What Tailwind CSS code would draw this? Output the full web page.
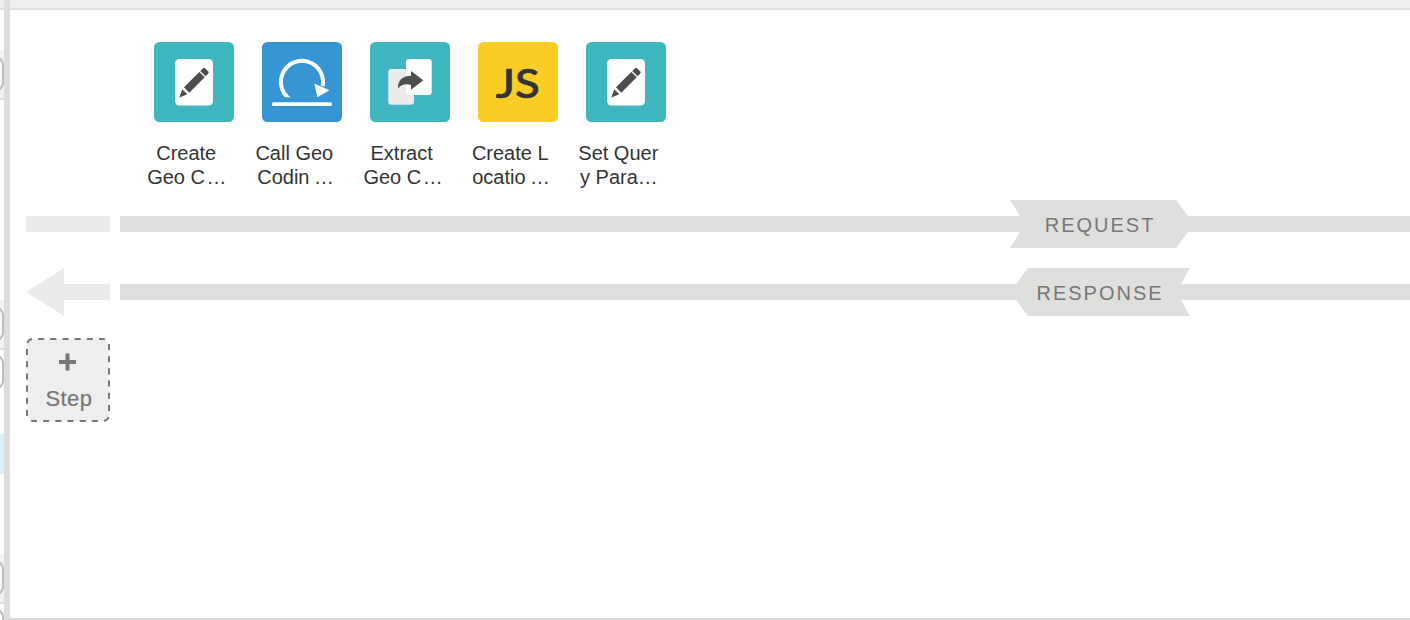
<!DOCTYPE html>
<html lang="en">
<head>
<meta charset="utf-8">
<title>Flow editor</title>
<script src="https://cdn.jsdelivr.net/npm/@tailwindcss/browser@4"></script>
</head>
<body class="w-[1410px] h-[620px] overflow-hidden bg-white flex font-['Liberation_Sans',sans-serif]">
<svg class="hidden">
  <symbol id="pencil" viewBox="0 0 80 80">
    <rect width="80" height="80" rx="5.5" fill="#3fb6bf"/>
    <rect x="21" y="17" width="38" height="46.5" rx="4.5" fill="#fff"/>
    <path fill="#4d4d4d" d="M25.3 55.5L28.3 47.2L33.4 52.3ZM30 45.3L45.3 30L50.7 35.2L35.3 50.7ZM46.3 29L49 26.3Q50 25.4 51 26.3L54.4 29.6Q55.1 30.5 54.4 31.3L51.5 34.2Z"/>
  </symbol>
</svg>
<aside class="w-1 shrink-0 overflow-hidden flex flex-col">
  <div class="h-2.5 shrink-0 bg-[#eee] border-b-2 border-[#ddd]"></div>
  <div class="mt-10 h-[50px] shrink-0 bg-[#f2f2f2] border-b-2 border-[#ddd] flex items-center justify-end"><div class="w-10 h-[34px] shrink-0 border-2 border-[#b4bfc4] rounded-lg bg-[#f7f7f7]"></div></div>
  <div class="mt-[200px] h-[50px] shrink-0 bg-[#f2f2f2] border-b-2 border-[#ddd] flex items-center justify-end"><div class="w-10 h-[34px] shrink-0 border-2 border-[#b4bfc4] rounded-lg bg-[#f7f7f7]"></div></div>
  <div class="h-[84px] shrink-0 pt-[5px] flex justify-end"><div class="w-10 h-[34px] shrink-0 border-2 border-[#b4bfc4] rounded-lg"></div></div>
  <div class="h-10 shrink-0 bg-[#d9effa]"></div>
  <div class="mt-20 h-[50px] shrink-0 bg-[#f2f2f2] border-b-2 border-[#ddd] flex items-center justify-end"><div class="w-10 h-[34px] shrink-0 border-2 border-[#b4bfc4] rounded-lg bg-[#f7f7f7]"></div></div>
  <div class="h-10 shrink-0 pt-[5px] flex justify-end"><div class="w-10 h-[34px] shrink-0 border-2 border-[#b4bfc4] rounded-lg"></div></div>
</aside>
<div class="w-1.5 shrink-0 bg-[#dcdcdc]"></div>
<main class="w-[1400px] h-[620px] flex flex-col border-b-2 border-[#dcdcdc]">
  <div class="h-2.5 shrink-0 bg-[#eee] border-b-2 border-[#e0e0e0]"></div>
  <section class="flex pl-[130px] pt-8 h-[190px] shrink-0 text-[20px] leading-6 text-[#333] whitespace-nowrap">
    <div class="w-[108px]">
      <svg class="ml-3.5 size-20"><use href="#pencil"/></svg>
      <div class="pt-[19px]"><div class="pl-[16.2px]">Create</div><div class="pl-[7.2px]">Geo C<span class="ml-[1.5px]">…</span></div></div>
    </div>
    <div class="w-[108px]">
      <svg class="ml-3.5 size-20" viewBox="0 0 80 80">
        <clipPath id="cut"><path d="M0 0H80V55.3H0Z"/></clipPath>
        <rect width="80" height="80" rx="5.5" fill="#3695d4"/>
        <path clip-path="url(#cut)" d="M29 58A21.1 21.1 0 1 1 60.7 44" fill="none" stroke="#fff" stroke-width="4"/>
        <path d="M52.3 41.5L67.5 48.2L55.4 55.2Z" fill="#fff"/>
        <rect x="10" y="60.3" width="60" height="3.7" rx="1.5" fill="#fff"/>
      </svg>
      <div class="pt-[19px]"><div class="pl-[7.4px]">Call Geo</div><div class="pl-[9.2px]">Codin<span class="ml-[4.5px]">…</span></div></div>
    </div>
    <div class="w-[108px]">
      <svg class="ml-3.5 size-20" viewBox="0 0 80 80">
        <rect width="80" height="80" rx="5.5" fill="#3fb6bf"/>
        <rect x="18.3" y="27" width="25.7" height="35.8" rx="3" fill="#ebebeb"/>
        <rect x="36" y="17" width="25.7" height="36" rx="3" fill="#fff"/>
        <path fill="#4d4d4d" d="M28.2 46.5C27.5 39 32 34 41 33.8V29L53.3 38.3L41 47.8V43C35.5 41.5 31 42.5 28.2 46.5Z"/>
      </svg>
      <div class="pt-[19px]"><div class="pl-[14.5px]">Extract</div><div class="pl-[7.4px]">Geo C<span class="ml-[1.5px]">…</span></div></div>
    </div>
    <div class="w-[108px]">
      <svg class="ml-3.5 size-20" viewBox="0 0 80 80">
        <rect width="80" height="80" rx="5.5" fill="#f9cd23"/>
        <text x="17.8" y="55.6" textLength="44" lengthAdjust="spacingAndGlyphs" class="font-['Lato'] font-medium text-[40px]" fill="#333" stroke="#333" stroke-width="0.7">JS</text>
      </svg>
      <div class="pt-[19px]"><div class="pl-[7.9px]">Create L</div><div class="pl-[8.2px]">ocatio<span class="ml-[4.5px]">…</span></div></div>
    </div>
    <div class="w-[108px]">
      <svg class="ml-3.5 size-20"><use href="#pencil"/></svg>
      <div class="pt-[19px]"><div class="pl-[6.3px]">Set Quer</div><div class="pl-[8px]">y Para<span>…</span></div></div>
    </div>
  </section>
  <section class="h-12 shrink-0 flex items-center pl-4">
    <div class="w-[84px] h-4 bg-[#ebebeb]"></div>
    <div class="ml-2.5 w-[900px] h-4 bg-[#dfdfdd]"></div>
    <div class="-ml-2.5 w-[178px] h-12 bg-[#dfdfdd] [clip-path:polygon(0_0,166px_0,178px_16px,178px_32px,166px_48px,0_48px,10px_32px,10px_16px)] text-[#777] text-[20px] tracking-[2px] leading-[50px] pl-[34.7px]">REQUEST</div>
    <div class="grow h-4 bg-[#dfdfdd]"></div>
  </section>
  <section class="h-12 mt-5 shrink-0 flex items-center pl-4">
    <svg class="w-[84px] h-12" viewBox="0 0 84 48"><path fill="#ebebeb" d="M0 24L38 0V16H84V32H38V48Z"/></svg>
    <div class="ml-2.5 w-[896px] h-4 bg-[#dfdfdd]"></div>
    <div class="w-[174px] h-12 bg-[#dfdfdd] [clip-path:polygon(12px_0,174px_0,165px_16px,165px_32px,174px_48px,12px_48px,0_32px,0_16px)] text-[#777] text-[20px] tracking-[2px] leading-[50px] pl-[20.5px]">RESPONSE</div>
    <div class="-ml-[9px] grow h-4 bg-[#dfdfdd]"></div>
  </section>
  <button class="ml-4 mt-[22px] size-[84px] shrink-0 text-[#777]">
    <svg class="size-[84px]" viewBox="0 0 84 84">
      <rect x="1" y="1" width="82" height="82" rx="6" fill="#eee" stroke="#777" stroke-width="2" pathLength="312" stroke-dasharray="6 6" stroke-dashoffset="7"/>
      <path d="M33 24H50M41.5 15.5V32.5" stroke="#777" stroke-width="4"/>
      <text x="19.5" y="68" fill="#777" stroke="#777" stroke-width="0.2" class="text-[22px]" textLength="46.5">Step</text>
    </svg>
  </button>
</main>
</body>
</html>
